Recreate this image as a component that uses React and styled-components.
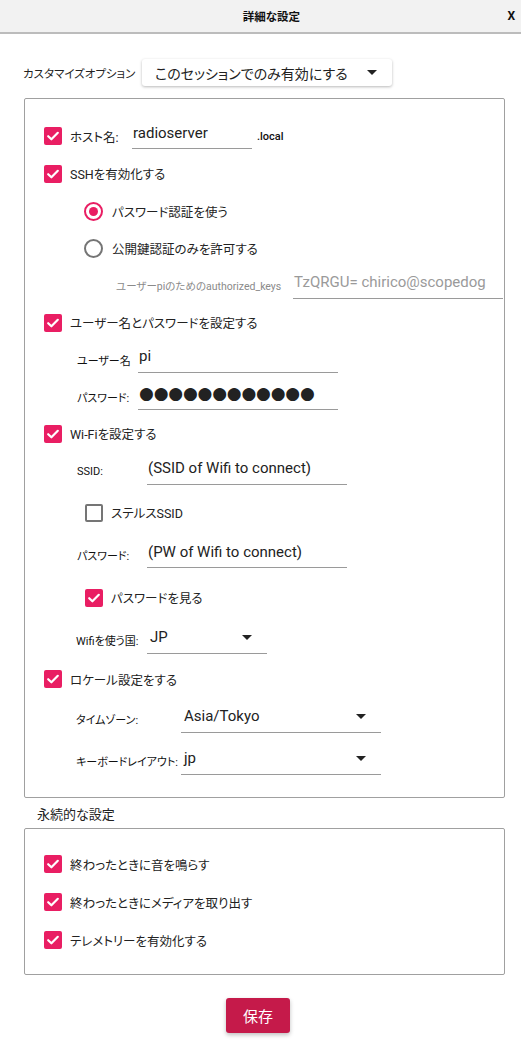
import styled, { createGlobalStyle } from "styled-components";

const sans = `Roboto, "Noto Sans CJK JP", sans-serif`;

const GlobalStyle = createGlobalStyle`
  html, body {
    margin: 0;
    padding: 0;
    background: #fff;
  }
  body {
    font-family: ${sans};
    color: #222;
    font-feature-settings: "palt";
  }
`;

const Page = styled.div`
  width: 521px;
  min-height: 1050px;
  display: flex;
  flex-direction: column;
  background: #fff;
`;

const Header = styled.div`
  height: 32px;
  display: grid;
  grid-template-columns: 1fr auto 1fr;
  align-items: center;
  padding: 0 6px 0 28px;
  background: #f2f2f2;
  border-bottom: 2px solid #bcbcbc;
`;

const HeaderTitle = styled.div`
  grid-column: 2;
  font-size: 11.5px;
  font-weight: 700;
  color: #111;
`;

const CloseButton = styled.button`
  justify-self: end;
  border: none;
  background: none;
  padding: 0;
  font: 700 12px ${sans};
  color: #111;
`;

const Content = styled.div`
  display: flex;
  flex-direction: column;
  padding: 25px 16px 0 24px;
`;

const OptionRow = styled.div`
  display: flex;
  align-items: center;
  margin-left: -1px;
`;

const OptionLabel = styled.span`
  width: 119px;
  font-size: 11.5px;
  color: #222;
  white-space: nowrap;
`;

const OptionSelect = styled.div`
  width: 250px;
  height: 27px;
  box-sizing: border-box;
  display: flex;
  align-items: center;
  justify-content: space-between;
  padding: 0 15px 0 13px;
  border-radius: 3px;
  background: #fff;
  box-shadow: 0 1px 3px rgba(0, 0, 0, 0.28);
  font-size: 14px;
  color: #222;
`;

const Arrow = styled.span`
  width: 0;
  height: 0;
  border-left: 5px solid transparent;
  border-right: 5px solid transparent;
  border-top: 5px solid #222;
`;

const Panel = styled.div`
  margin-top: ${(p) => p.$top || 0}px;
  border: 1px solid #a0a0a0;
  border-radius: 2px;
  padding: ${(p) => p.$pad};
`;

const Row = styled.div`
  height: ${(p) => p.$h}px;
  display: flex;
  align-items: center;
  padding-left: ${(p) => p.$indent || 0}px;
`;

const Box = styled.span`
  flex: none;
  width: 18px;
  height: 18px;
  box-sizing: border-box;
  border-radius: 2px;
  display: flex;
  align-items: center;
  justify-content: center;
  background: ${(p) => (p.$on ? "#e91e63" : "#fff")};
  border: ${(p) => (p.$on ? "none" : "2px solid #757575")};
`;

const Check = ({ on = true }) => (
  <Box $on={on}>
    {on && (
      <svg width="18" height="18" viewBox="0 0 18 18">
        <path d="M4.2 9.2 L7.4 12.3 L13.8 5.8" fill="none" stroke="#fff" strokeWidth="2.2" strokeLinecap="round" strokeLinejoin="round" />
      </svg>
    )}
  </Box>
);

const RadioRing = styled.span`
  flex: none;
  width: 19px;
  height: 19px;
  box-sizing: border-box;
  border-radius: 50%;
  border: 2px solid ${(p) => (p.$on ? "#e91e63" : "#757575")};
  display: flex;
  align-items: center;
  justify-content: center;
  &::after {
    content: "";
    width: 9px;
    height: 9px;
    border-radius: 50%;
    background: ${(p) => (p.$on ? "#e91e63" : "transparent")};
  }
`;

const Label = styled.span`
  flex: none;
  width: ${(p) => (p.$w ? `${p.$w}px` : "auto")};
  margin-left: ${(p) => p.$gap ?? 8}px;
  font-size: 12.5px;
  color: #222;
  white-space: nowrap;
`;

const SubLabel = styled.span`
  flex: none;
  width: ${(p) => p.$w}px;
  font-size: ${(p) => (p.$muted ? 10.5 : 11)}px;
  color: ${(p) => (p.$muted ? "#8a8a8a" : "#111")};
  white-space: nowrap;
`;

const TextField = styled.div`
  flex: none;
  width: ${(p) => p.$w}px;
  height: 32px;
  margin-bottom: 6px;
  box-sizing: border-box;
  display: flex;
  align-items: center;
  padding-left: 1px;
  border-bottom: 1px solid #9a9a9a;
  overflow: hidden;
  white-space: nowrap;
  font-size: 15px;
  color: ${(p) => (p.$muted ? "#9a9a9a" : "#222")};
`;

const Dots = styled.span`
  font-family: "DejaVu Sans", sans-serif;
  font-size: 17px;
  letter-spacing: -0.2px;
  color: #222;
`;

const Select = styled(TextField)`
  justify-content: space-between;
  padding: 0 15px 0 3px;
  margin-bottom: 4px;
`;

const Suffix = styled.span`
  margin-left: 5px;
  font-size: 11px;
  font-weight: 500;
  color: #111;
`;

const SectionTitle = styled.div`
  height: 30px;
  display: flex;
  align-items: center;
  padding-left: 13px;
  font-size: 13px;
  color: #222;
`;

const Footer = styled.div`
  display: flex;
  justify-content: center;
  padding: 23px 13px 0 0;
`;

const SaveButton = styled.button`
  width: 64px;
  height: 35px;
  border: none;
  border-radius: 3px;
  background: #c51a4a;
  color: #fff;
  font: 15px ${sans};
  box-shadow: 0 2px 4px rgba(0, 0, 0, 0.25);
`;

const mask = "●".repeat(12);

export default function App() {
  return (
    <Page>
      <GlobalStyle />
      <Header>
        <HeaderTitle>詳細な設定</HeaderTitle>
        <CloseButton>X</CloseButton>
      </Header>
      <Content>
        <OptionRow>
          <OptionLabel>カスタマイズオプション</OptionLabel>
          <OptionSelect>
            このセッションでのみ有効にする
            <Arrow />
          </OptionSelect>
        </OptionRow>

        <Panel $top={12} $pad="18px 0 15px 19px">
          <Row $h={38}>
            <Check />
            <Label $w={62}>ホスト名:</Label>
            <TextField $w={120}>radioserver</TextField>
            <Suffix>.local</Suffix>
          </Row>
          <Row $h={37}>
            <Check />
            <Label>SSHを有効化する</Label>
          </Row>
          <Row $h={38} $indent={40}>
            <RadioRing $on />
            <Label $gap={9}>パスワード認証を使う</Label>
          </Row>
          <Row $h={37} $indent={40}>
            <RadioRing />
            <Label $gap={9}>公開鍵認証のみを許可する</Label>
          </Row>
          <Row $h={37} $indent={72}>
            <SubLabel $w={177} $muted>ユーザーpiのためのauthorized_keys</SubLabel>
            <TextField $w={210} $muted>TzQRGU= chirico@scopedog</TextField>
          </Row>
          <Row $h={37}>
            <Check />
            <Label>ユーザー名とパスワードを設定する</Label>
          </Row>
          <Row $h={37} $indent={33}>
            <SubLabel $w={61}>ユーザー名</SubLabel>
            <TextField $w={200}>pi</TextField>
          </Row>
          <Row $h={37} $indent={33}>
            <SubLabel $w={61}>パスワード:</SubLabel>
            <TextField $w={200}>
              <Dots>{mask}</Dots>
            </TextField>
          </Row>
          <Row $h={37}>
            <Check />
            <Label>Wi-Fiを設定する</Label>
          </Row>
          <Row $h={39} $indent={33}>
            <SubLabel $w={70}>SSID:</SubLabel>
            <TextField $w={200}>(SSID of Wifi to connect)</TextField>
          </Row>
          <Row $h={43} $indent={41}>
            <Check on={false} />
            <Label>ステルスSSID</Label>
          </Row>
          <Row $h={42} $indent={33}>
            <SubLabel $w={70}>パスワード:</SubLabel>
            <TextField $w={200}>(PW of Wifi to connect)</TextField>
          </Row>
          <Row $h={43} $indent={41}>
            <Check />
            <Label>パスワードを見る</Label>
          </Row>
          <Row $h={41} $indent={32}>
            <SubLabel $w={71}>Wifiを使う国:</SubLabel>
            <Select $w={120}>
              JP
              <Arrow />
            </Select>
          </Row>
          <Row $h={38}>
            <Check />
            <Label>ロケール設定をする</Label>
          </Row>
          <Row $h={41} $indent={32}>
            <SubLabel $w={105}>タイムゾーン:</SubLabel>
            <Select $w={200}>
              Asia/Tokyo
              <Arrow />
            </Select>
          </Row>
          <Row $h={43} $indent={32}>
            <SubLabel $w={105}>キーボードレイアウト:</SubLabel>
            <Select $w={200}>
              jp
              <Arrow />
            </Select>
          </Row>
        </Panel>

        <SectionTitle>永続的な設定</SectionTitle>
        <Panel $pad="16px 0 15px 19px">
          <Row $h={38}>
            <Check />
            <Label>終わったときに音を鳴らす</Label>
          </Row>
          <Row $h={38}>
            <Check />
            <Label>終わったときにメディアを取り出す</Label>
          </Row>
          <Row $h={38}>
            <Check />
            <Label>テレメトリーを有効化する</Label>
          </Row>
        </Panel>

        <Footer>
          <SaveButton>保存</SaveButton>
        </Footer>
      </Content>
    </Page>
  );
}
